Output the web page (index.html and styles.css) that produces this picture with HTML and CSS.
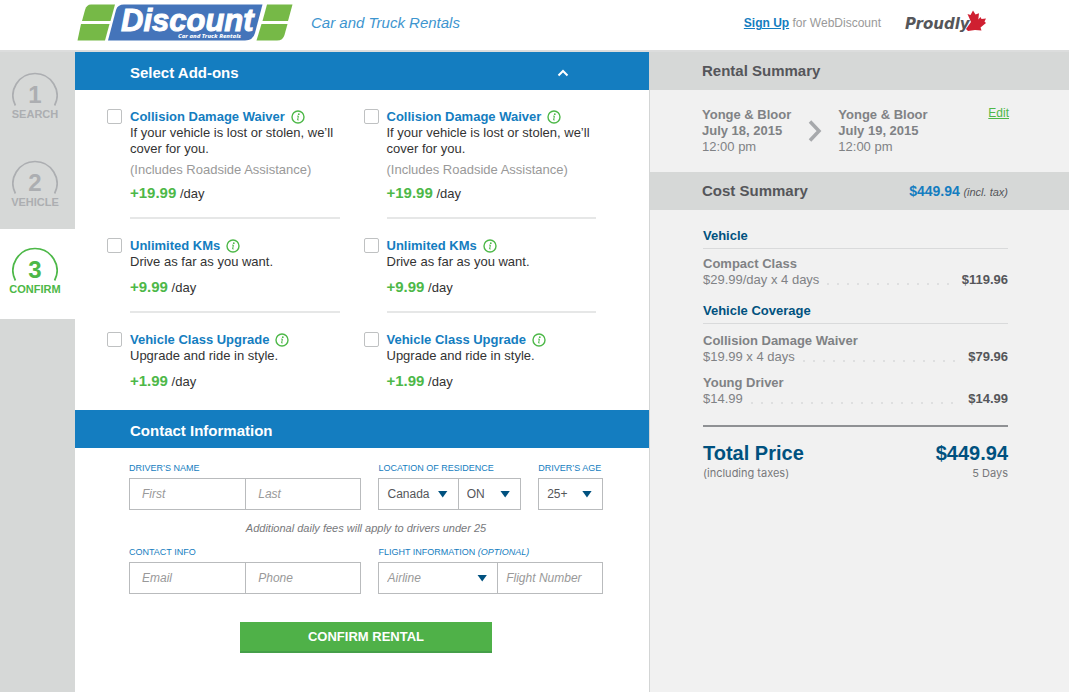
FILE: index.html
```html
<!DOCTYPE html>
<html lang="en">
<head>
<meta charset="utf-8">
<meta name="viewport" content="width=device-width, initial-scale=1">
<title>Discount Car and Truck Rentals - Confirm</title>
<link rel="stylesheet" href="styles.css">
</head>
<body>
<svg class="defs" aria-hidden="true">
  <symbol id="info" viewBox="0 0 14 14">
    <circle cx="7" cy="7" r="6" fill="none" stroke="#4db848" stroke-width="1.4"/>
    <circle cx="7.8" cy="4.2" r="0.9" fill="#4db848"/>
    <path d="M6.2 6.1h1.2L6.6 10h1" fill="none" stroke="#4db848" stroke-width="1"/>
  </symbol>
  <symbol id="arc" viewBox="0 0 46 36">
    <path d="M3.4 33.5A22 22 0 1 1 42.6 33.5" fill="none" stroke="currentColor" stroke-width="1.7"/>
  </symbol>
</svg>
<header class="top">
  <a class="logo" href="#" aria-label="Discount Car and Truck Rentals">
    <svg viewBox="0 0 216 38" width="216" height="38">
      <path d="M14 .5H38L33.500 17H5L8 6Q9.500 .5 14 .5Z" fill="#76b947"/>
      <path d="M4 20H32.500L28 36.500H.5Z" fill="#76b947"/>
      <path d="M190 .5H215.500L211 17H185.500Z" fill="#76b947"/>
      <path d="M184.500 20H210.500L207.500 31Q206 36.500 200 36.500H179.500Z" fill="#76b947"/>
      <path d="M47 .5H185.500L178 29Q176 36.500 168 36.500H31L39 6Q40.500 .5 47 .5Z" fill="#4474ba"/>
      <text class="logo-name" x="44" y="27">Discount</text>
      <text class="logo-sub" x="101" y="34">Car and Truck Rentals</text>
    </svg>
  </a>
  <p class="tagline">Car and Truck Rentals</p>
  <p class="signup"><a href="#">Sign Up</a> for WebDiscount</p>
  <svg class="proudly" viewBox="0 0 82 28" width="82" height="28" role="img" aria-label="Proudly Canadian">
    <path d="M68 1.500L70.500 5.500 74 4.200 73.300 10.500 75.500 8 76.500 10 81 9.500 79.500 12.500 81 14 75.500 18.500 76.500 21.500 70 21 63 22 61 20 66 13 62.500 5 65.500 6Z" fill="#cf2031"/>
    <text class="proudly-text" x="0" y="20">Proudly</text>
  </svg>
</header>

<div class="layout">
  <nav class="steps" aria-label="Progress">
    <a class="step" href="#"><span class="dial"><svg><use href="#arc"/></svg><b>1</b></span>SEARCH</a>
    <a class="step" href="#"><span class="dial"><svg><use href="#arc"/></svg><b>2</b></span>VEHICLE</a>
    <a class="step current" href="#" aria-current="step"><span class="dial"><svg><use href="#arc"/></svg><b>3</b></span>CONFIRM</a>
  </nav>

  <main class="main">
    <div class="bar">
      <h2>Select Add-ons</h2>
      <button class="toggle" type="button" aria-label="Collapse add-ons"><svg viewBox="0 0 12 8" width="12" height="8"><path d="M1.500 6.500L6 2l4.500 4.500" fill="none" stroke="#fff" stroke-width="2"/></svg></button>
    </div>
    <div class="addons">
      <section class="addon">
        <input type="checkbox" id="a1">
        <div class="addon-body">
          <h3><label for="a1">Collision Damage Waiver</label><svg class="info"><use href="#info"/></svg></h3>
          <p>If your vehicle is lost or stolen, we’ll cover for you.</p>
          <p class="note">(Includes Roadside Assistance)</p>
          <p class="price"><b>+19.99</b> /day</p>
        </div>
      </section>
      <section class="addon">
        <input type="checkbox" id="b1">
        <div class="addon-body">
          <h3><label for="b1">Collision Damage Waiver</label><svg class="info"><use href="#info"/></svg></h3>
          <p>If your vehicle is lost or stolen, we’ll cover for you.</p>
          <p class="note">(Includes Roadside Assistance)</p>
          <p class="price"><b>+19.99</b> /day</p>
        </div>
      </section>
      <section class="addon">
        <input type="checkbox" id="a2">
        <div class="addon-body">
          <h3><label for="a2">Unlimited KMs</label><svg class="info"><use href="#info"/></svg></h3>
          <p>Drive as far as you want.</p>
          <p class="price"><b>+9.99</b> /day</p>
        </div>
      </section>
      <section class="addon">
        <input type="checkbox" id="b2">
        <div class="addon-body">
          <h3><label for="b2">Unlimited KMs</label><svg class="info"><use href="#info"/></svg></h3>
          <p>Drive as far as you want.</p>
          <p class="price"><b>+9.99</b> /day</p>
        </div>
      </section>
      <section class="addon last">
        <input type="checkbox" id="a3">
        <div class="addon-body">
          <h3><label for="a3">Vehicle Class Upgrade</label><svg class="info"><use href="#info"/></svg></h3>
          <p>Upgrade and ride in style.</p>
          <p class="price"><b>+1.99</b> /day</p>
        </div>
      </section>
      <section class="addon last">
        <input type="checkbox" id="b3">
        <div class="addon-body">
          <h3><label for="b3">Vehicle Class Upgrade</label><svg class="info"><use href="#info"/></svg></h3>
          <p>Upgrade and ride in style.</p>
          <p class="price"><b>+1.99</b> /day</p>
        </div>
      </section>
    </div>

    <div class="bar"><h2>Contact Information</h2></div>
    <form class="contact">
      <div class="fields">
        <div class="field">
          <label for="first">DRIVER’S NAME</label>
          <div class="group">
            <input id="first" type="text" placeholder="First">
            <input type="text" placeholder="Last" aria-label="Last name">
          </div>
        </div>
        <div class="field">
          <label for="country">LOCATION OF RESIDENCE</label>
          <div class="group residence">
            <span class="select"><select id="country"><option>Canada</option></select></span>
            <span class="select"><select aria-label="Province"><option>ON</option></select></span>
          </div>
        </div>
        <div class="field">
          <label for="age">DRIVER’S AGE</label>
          <div class="group"><span class="select"><select id="age"><option>25+</option></select></span></div>
        </div>
      </div>
      <p class="hint">Additional daily fees will apply to drivers under 25</p>
      <div class="fields">
        <div class="field">
          <label for="email">CONTACT INFO</label>
          <div class="group">
            <input id="email" type="email" placeholder="Email">
            <input type="tel" placeholder="Phone" aria-label="Phone">
          </div>
        </div>
        <div class="field wide">
          <label for="airline">FLIGHT INFORMATION <i>(OPTIONAL)</i></label>
          <div class="group flight">
            <span class="select"><select id="airline" class="empty"><option>Airline</option></select></span>
            <input type="text" placeholder="Flight Number" aria-label="Flight number">
          </div>
        </div>
      </div>
      <button class="confirm" type="submit">CONFIRM RENTAL</button>
    </form>
  </main>

  <aside class="summary">
    <div class="head"><h2>Rental Summary</h2></div>
    <div class="trip">
      <p><b>Yonge &amp; Bloor<br>July 18, 2015</b><br>12:00 pm</p>
      <svg viewBox="0 0 14 22" width="14" height="22"><path d="M2 1.500L11 11l-9 9.500" fill="none" stroke="#a7a9ac" stroke-width="3.500"/></svg>
      <p><b>Yonge &amp; Bloor<br>July 19, 2015</b><br>12:00 pm</p>
      <a href="#">Edit</a>
    </div>
    <div class="head"><h2>Cost Summary</h2><p class="due"><b>$449.94</b> <i>(incl. tax)</i></p></div>
    <div class="costs">
      <h3>Vehicle</h3>
      <div class="item">
        <b>Compact Class</b>
        <p class="line"><span>$29.99/day x 4 days</span><span class="dots"></span><strong>$119.96</strong></p>
      </div>
      <h3>Vehicle Coverage</h3>
      <div class="item">
        <b>Collision Damage Waiver</b>
        <p class="line"><span>$19.99 x 4 days</span><span class="dots"></span><strong>$79.96</strong></p>
      </div>
      <div class="item">
        <b>Young Driver</b>
        <p class="line"><span>$14.99</span><span class="dots"></span><strong>$14.99</strong></p>
      </div>
      <div class="total">
        <p class="sum"><span>Total Price</span><span>$449.94</span></p>
        <p class="sub"><span>(including taxes)</span><span>5 Days</span></p>
      </div>
    </div>
  </aside>
</div>
</body>
</html>
```
FILE: styles.css
```css
* { box-sizing: border-box; }
body {
  margin: 0;
  min-height: 100vh;
  display: flex;
  flex-direction: column;
  background: #fff;
  color: #333;
  font: 13px/16px "Liberation Sans", Arial, sans-serif;
}
h2, h3, p { margin: 0; }
input, select, button { font: inherit; margin: 0; }
.defs { position: absolute; width: 0; height: 0; }

.top {
  display: flex;
  align-items: center;
  height: 52px;
  padding: 0 82px 4px 77px;
  border-bottom: 2px solid #dcdddd;
}
.logo { display: block; height: 38px; }
.logo svg, .proudly { display: block; overflow: visible; }
.logo-name { font: italic bold 31px "Liberation Sans", Arial, sans-serif; fill: #fff; stroke: #fff; stroke-width: 1px; }
.logo-sub { font: italic 800 6px "Noto Sans", sans-serif; fill: #fff; }
.tagline { margin-left: 18px; color: #3d95cf; font-size: 15px; font-style: italic; }
.signup { margin-left: auto; color: #999; font-size: 12px; }
.signup a { color: #147dc0; font-weight: bold; }
.proudly { margin-left: 24px; }
.proudly-text { font: italic bold 15px "DejaVu Sans", sans-serif; fill: #55565a; }

.layout {
  flex: 1;
  display: grid;
  grid-template-columns: 75px minmax(0, 574fr) minmax(0, 420fr);
}

.steps { padding-top: 1px; background: #d6d8d7; }
.step {
  display: flex;
  flex-direction: column;
  align-items: center;
  padding: 19px 5px 21px 0;
  color: #acaeb1;
  font-size: 11px;
  font-weight: bold;
  line-height: 12px;
  text-decoration: none;
}
.step.current { background: #fff; color: #4db848; padding: 18px 5px 24px 0; }
.dial { display: grid; justify-items: center; width: 46px; height: 36px; }
.dial svg, .dial b { grid-area: 1 / 1; }
.dial svg { width: 46px; height: 36px; }
.dial b { font-size: 24px; line-height: 46px; }

.bar {
  display: flex;
  align-items: center;
  justify-content: space-between;
  height: 38px;
  padding: 3px 78px 0 55px;
  background: #147dc0;
  color: #fff;
}
.bar h2, .head h2 { font-size: 15px; line-height: 20px; }
.toggle { display: grid; padding: 2px; border: 0; background: none; }

.addons {
  display: grid;
  grid-template-columns: 1fr 1fr;
  column-gap: 24px;
  padding: 0 53px 5px 32px;
}
.addon { display: flex; gap: 8px; padding-top: 19px; }
.addon input {
  appearance: none;
  flex: none;
  width: 15px;
  height: 15px;
  border: 1px solid #bfc1c2;
  border-radius: 2px;
  background: #fff;
}
.addon input:checked { background: #147dc0; }
.addon-body { flex: 1; padding-bottom: 15px; border-bottom: 2px solid #e6e7e7; }
.last .addon-body { border-bottom: 0; }
.addon h3 { display: flex; align-items: center; gap: 6px; color: #147dc0; font-size: 13px; }
.info { width: 14px; height: 14px; }
.addon .note { margin: 5px 0 -2px; color: #999; }
.price { margin-top: 10px; }
.price b { color: #4db848; font-size: 15px; line-height: 12px; }

.contact { display: flex; flex-direction: column; padding: 12px 46px 38px 54px; }
.fields { display: grid; grid-template-columns: 233fr 143fr 65fr; column-gap: 17px; }
.wide { grid-column: span 2; }
.field label { display: block; margin-bottom: 2px; color: #147dc0; font-size: 9px; white-space: nowrap; }
.group { display: grid; grid-auto-flow: column; grid-auto-columns: 1fr; height: 32px; border: 1px solid #b9bbbd; }
.residence { grid-template-columns: 79fr 63fr; }
.flight { grid-template-columns: 118fr 105fr; }
.group > * + * { border-left: 1px solid #b9bbbd; }
.group > input { min-width: 0; padding: 0 12px; border-width: 0; background: none; color: #55565a; font-size: 12px; }
.group > input + input, .select + input { border-left-width: 1px; border-left-style: solid; }
.flight > input { padding: 0 8px; }
.group ::placeholder { color: #999; font-style: italic; opacity: 1; }
.select { display: grid; align-items: center; min-width: 0; }
.select select {
  grid-area: 1 / 1;
  appearance: none;
  width: 100%;
  height: 30px;
  padding: 0 8px;
  border: 0;
  background: none;
  color: #55565a;
  font-size: 12px;
}
.select select.empty { color: #999; font-style: italic; }
.select::after {
  content: "";
  grid-area: 1 / 1;
  justify-self: end;
  width: 10px;
  height: 7px;
  margin-right: 10px;
  background: #00517f;
  clip-path: polygon(0 0, 100% 0, 50% 100%);
  pointer-events: none;
}
.hint { padding: 10px 0 8px; color: #77787b; font-size: 11px; font-style: italic; text-align: center; }
.confirm {
  align-self: center;
  width: 252px;
  height: 31px;
  margin-top: 28px;
  border: 0;
  border-bottom: 2px solid #459f49;
  background: #4fb148;
  color: #fff;
  font-weight: bold;
}

.summary { border-left: 1px solid #d3d5d5; background: #f1f1f1; color: #808285; }
.head {
  display: flex;
  align-items: center;
  justify-content: space-between;
  height: 38px;
  padding: 0 61px 0 52px;
  background: #d6d8d7;
  color: #55565a;
}
.due b { color: #147dc0; font-size: 14px; }
.due i { font-size: 11px; }
.trip { display: flex; padding: 17px 60px 17px 52px; }
.trip svg { margin: 13px 16px 0 17px; }
.trip a { margin-left: auto; color: #4db848; font-size: 12px; line-height: 12px; }
.costs { padding: 18px 61px 20px 53px; }
.costs h3 { margin-bottom: 7px; padding-bottom: 4px; border-bottom: 1px solid #d9dadb; color: #00517f; font-size: 13px; }
.item { margin-bottom: 10px; }
.item + h3 { margin-top: 15px; margin-bottom: 9px; }
.line { display: flex; }
.line strong { color: #55565a; }
.dots {
  flex: 1;
  height: 2px;
  margin: 11px 8px 0;
  background: repeating-linear-gradient(90deg, #dedfe0 0 2px, transparent 2px 10px);
}
.total { margin-top: 18px; padding-top: 14px; border-top: 2px solid #8f9194; }
.sum, .sub { display: flex; justify-content: space-between; }
.sum { color: #00517f; font-size: 20px; font-weight: bold; line-height: 24px; }
.sub { color: #77787b; font: 11px/16px Inter, sans-serif; }
```
